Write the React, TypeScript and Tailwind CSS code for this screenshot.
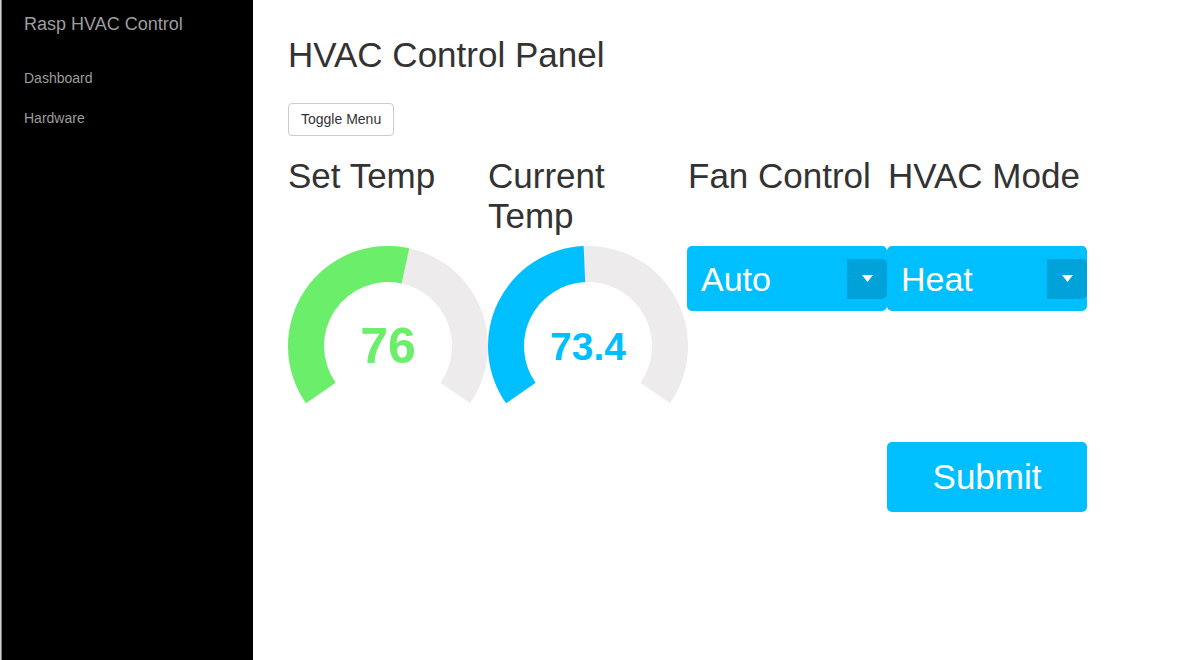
import React from "react";

function arcPath(cx: number, cy: number, R: number, r: number, a0: number, a1: number) {
  const rad = (d: number) => (d * Math.PI) / 180;
  const pt = (rr: number, a: number) => [cx + rr * Math.sin(rad(a)), cy - rr * Math.cos(rad(a))];
  const [x0, y0] = pt(R, a0);
  const [x1, y1] = pt(R, a1);
  const [x2, y2] = pt(r, a1);
  const [x3, y3] = pt(r, a0);
  const large = a1 - a0 > 180 ? 1 : 0;
  return `M${x0} ${y0} A${R} ${R} 0 ${large} 1 ${x1} ${y1} L${x2} ${y2} A${r} ${r} 0 ${large} 0 ${x3} ${y3} Z`;
}

function Gauge({ frac, color, label, size }: { frac: number; color: string; label: string; size: number }) {
  const start = -125;
  const end = 125;
  const mid = start + (end - start) * frac;
  return (
    <svg width="200" height="160" viewBox="0 0 200 160" className="block">
      <path d={arcPath(100, 100, 100, 64, start, end)} fill="#edebeb" />
      <path d={arcPath(100, 100, 100, 64, start, mid)} fill={color} />
      <text
        x="100"
        y={size > 45 ? 117 : 114}
        textAnchor="middle"
        fill={color}
        fontWeight="bold"
        fontSize={size}
        fontFamily="'Liberation Sans', Arial, sans-serif"
      >
        {label}
      </text>
    </svg>
  );
}

function Select({ value }: { value: string }) {
  return (
    <div className="flex h-[65px] w-[200px] items-center justify-between rounded-[5px] bg-[#00bfff] pl-[14px]">
      <span className="text-[34px] leading-[40px] text-white">{value}</span>
      <div className="flex h-[40px] w-[40px] items-center justify-center rounded-r-[5px] bg-[#00a3d9]">
        <svg width="11" height="7" viewBox="0 0 11 7">
          <path d="M0 0 L11 0 L5.5 7 Z" fill="#ffffff" />
        </svg>
      </div>
    </div>
  );
}

export default function App() {
  return (
    <div className="flex h-[660px] w-[1183px] font-['Liberation_Sans',Arial,sans-serif]">
      <aside className="flex h-full w-[253px] shrink-0 bg-black">
        <div className="w-px bg-[#d0d0d0]" />
        <div className="w-px bg-[#7c7c7c]" />
        <div className="pl-[22px] pt-[14px]">
          <div className="text-[18px] leading-[20px] text-[#9d9d9d]">Rasp HVAC Control</div>
          <ul className="mt-[24px]">
            <li className="py-[10px] text-[14px] leading-[20px] text-[#9d9d9d]">Dashboard</li>
            <li className="py-[10px] text-[14px] leading-[20px] text-[#9d9d9d]">Hardware</li>
          </ul>
        </div>
      </aside>
      <main className="flex-1 bg-white pl-[35px] pt-[35px] text-[#333]">
        <h1 className="text-[35px] leading-[40px]">HVAC Control Panel</h1>
        <button className="mt-[28px] h-[33px] rounded-[4px] border border-[#ccc] bg-white px-[12px] text-[14px] leading-[19px] text-[#333]">
          Toggle Menu
        </button>
        <div className="mt-[20px] grid grid-cols-[200px_200px_200px_200px]">
          <h2 className="text-[35px] leading-[40px]">Set Temp</h2>
          <h2 className="text-[35px] leading-[40px]">Current Temp</h2>
          <h2 className="whitespace-nowrap text-[35px] leading-[40px]">Fan Control</h2>
          <h2 className="whitespace-nowrap text-[35px] leading-[40px]">HVAC Mode</h2>
        </div>
        <div className="mt-[10px] grid grid-cols-[200px_200px_200px_200px]">
          <Gauge frac={0.549} color="#6bef6b" label="76" size={50} />
          <Gauge frac={0.49} color="#00bfff" label="73.4" size={39} />
          <div className="-ml-px">
            <Select value="Auto" />
          </div>
          <div className="-ml-px">
            <Select value="Heat" />
          </div>
        </div>
        <div className="mt-[36px] grid grid-cols-[200px_200px_200px_200px]">
          <div className="col-start-4 -ml-px">
            <button className="flex h-[70px] w-[200px] items-center justify-center rounded-[5px] bg-[#00bfff] text-[35px] leading-[40px] text-white">
              Submit
            </button>
          </div>
        </div>
      </main>
    </div>
  );
}
